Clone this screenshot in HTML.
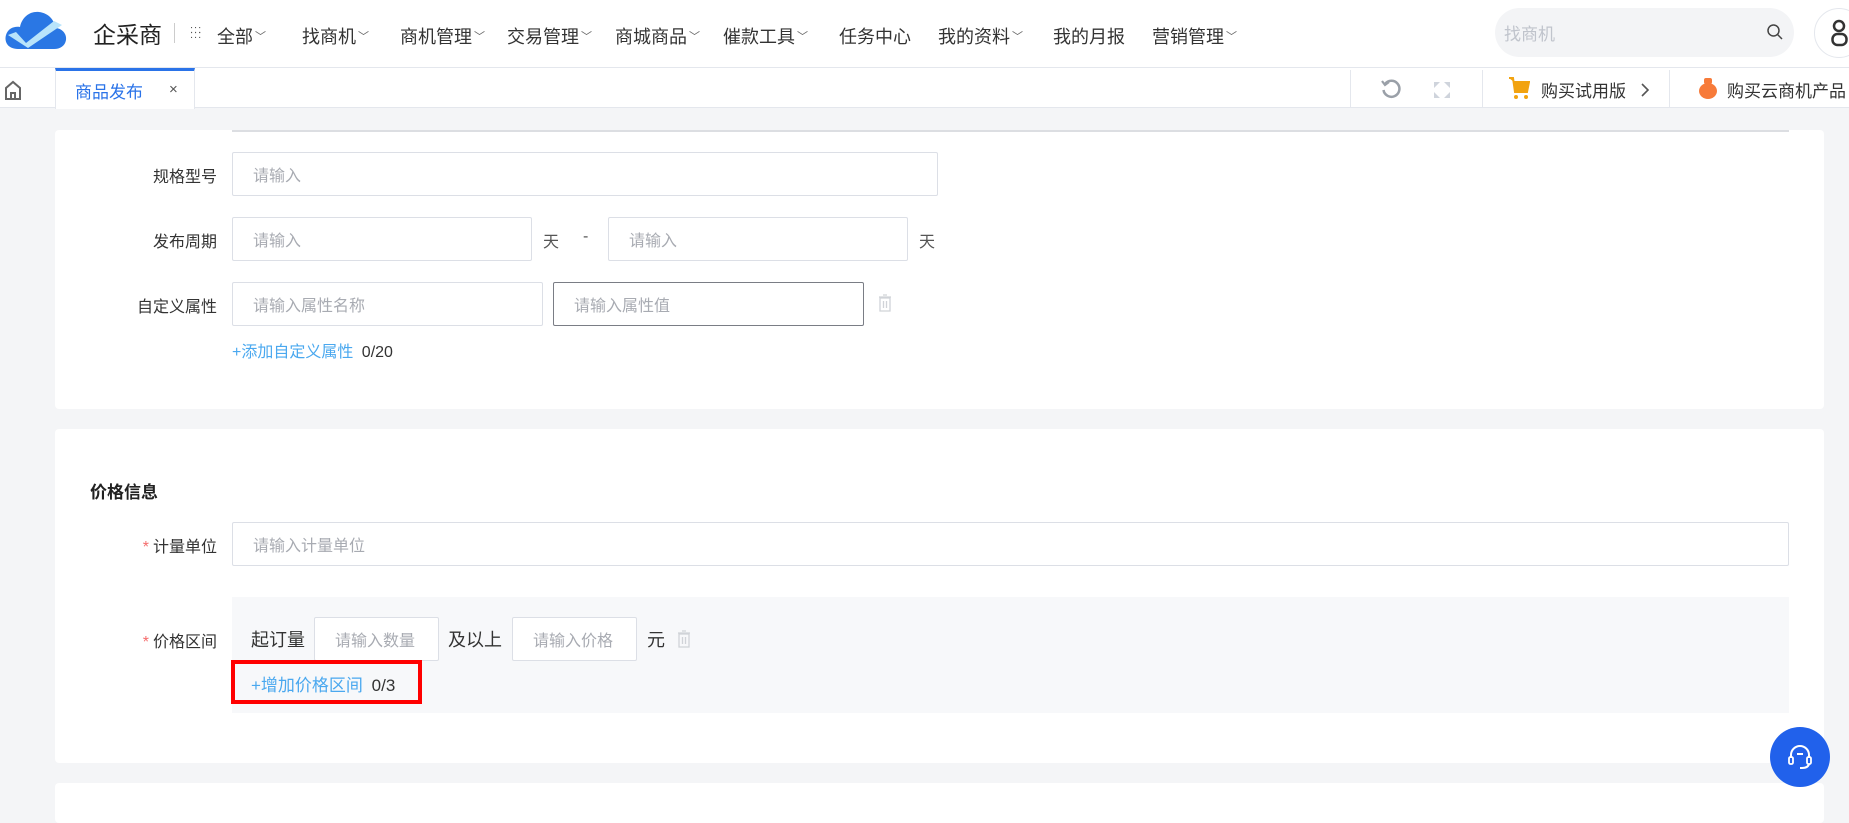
<!DOCTYPE html>
<html><head><meta charset="utf-8"><style>
*{margin:0;padding:0;box-sizing:border-box}
body{width:1849px;height:810px;overflow:hidden;background:#f4f5f7;font-family:"Liberation Sans","Noto Sans CJK SC",sans-serif;color:#333;position:relative}
.a{position:absolute}
.hdr{left:0;top:0;width:1849px;height:68px;background:#fff;border-bottom:1px solid #e4e7ed}
.nav{top:23px;font-size:18px;color:#333;white-space:nowrap}
.nav small{font-size:11px;color:#666;margin-left:2px;vertical-align:3px}
.tabs{left:0;top:68px;width:1849px;height:40px;background:#fff;border-bottom:1px solid #e4e7ed}
.card{background:#fff;border-radius:4px}
.lbl{font-size:16px;color:#333;text-align:right;width:200px;left:17px}
.inp{border:1px solid #dcdfe6;background:#fff;border-radius:2px;font-size:16px;color:#a8abb2;padding-left:20px;display:flex;align-items:center}
.t{font-size:16px;color:#555}
.star{color:#f56c6c;margin-right:4px}
</style></head><body>
<div class="a hdr"></div>
<svg class="a" style="left:4px;top:9px" width="64" height="42" viewBox="0 0 64 42"><path d="M14 40 C4 40 0 33 2 26 C4 19 11 17 16 18 C18 8 26 2 35 3 C45 4 51 12 51 19 C58 19 63 25 62 31 C61 37 56 40 50 40 Z" fill="#2a77e4"/><path d="M4 26 L12 23 L22 34 L50 12 L58 16 L24 39 Z" fill="#b9e4fb"/></svg>
<div class="a" style="left:93px;top:16px;font-size:23px;color:#222">企采商</div>
<div class="a" style="left:174px;top:23px;width:1px;height:20px;background:#ccc"></div>
<div class="a" style="left:190px;top:28px;font-size:11px;line-height:5px;color:#555;letter-spacing:1px">:::<br>:::</div>
<div class="a nav" style="left:217px">全部<small>﹀</small></div>
<div class="a nav" style="left:302px">找商机<small>﹀</small></div>
<div class="a nav" style="left:400px">商机管理<small>﹀</small></div>
<div class="a nav" style="left:507px">交易管理<small>﹀</small></div>
<div class="a nav" style="left:615px">商城商品<small>﹀</small></div>
<div class="a nav" style="left:723px">催款工具<small>﹀</small></div>
<div class="a nav" style="left:839px">任务中心</div>
<div class="a nav" style="left:938px">我的资料<small>﹀</small></div>
<div class="a nav" style="left:1053px">我的月报</div>
<div class="a nav" style="left:1152px">营销管理<small>﹀</small></div>
<div class="a" style="left:1495px;top:8px;width:299px;height:49px;border-radius:25px;background:#f3f4f6"></div>
<div class="a" style="left:1504px;top:20px;font-size:17px;color:#c0c4cc">找商机</div>
<svg class="a" style="left:1766px;top:23px" width="18" height="18" viewBox="0 0 18 18"><circle cx="7.5" cy="7.5" r="5.5" fill="none" stroke="#444" stroke-width="1.5"/><path d="M11.5 11.5 L16 16" stroke="#444" stroke-width="1.5"/></svg>
<div class="a" style="left:1814px;top:8px;width:50px;height:50px;border-radius:50%;border:1px solid #e4e7ed;background:#fff"></div>
<svg class="a" style="left:1830px;top:19px" width="19" height="28" viewBox="0 0 19 28"><circle cx="9" cy="7" r="5" fill="none" stroke="#333" stroke-width="2.5"/><rect x="2.5" y="15" width="14" height="11" rx="5" fill="none" stroke="#333" stroke-width="2.5"/></svg>

<div class="a tabs"></div>
<svg class="a" style="left:4px;top:80px" width="18" height="20" viewBox="0 0 18 20"><path d="M2 19 V8 L9 2 L16 8 V19 Z M7 19 V13 H11 V19" fill="none" stroke="#666" stroke-width="2"/></svg>
<div class="a" style="left:55px;top:68px;width:140px;height:41px;background:#fff;border-top:3px solid #2a73e8;border-left:1px solid #e4e7ed;border-right:1px solid #e4e7ed"></div>
<div class="a" style="left:75px;top:78px;font-size:17px;color:#2a73e8">商品发布</div>
<div class="a" style="left:169px;top:81px;font-size:15px;color:#555">×</div>
<div class="a" style="left:1350px;top:70px;width:1px;height:38px;background:#e4e7ed"></div>
<div class="a" style="left:1482px;top:70px;width:1px;height:38px;background:#e4e7ed"></div>
<div class="a" style="left:1669px;top:70px;width:1px;height:38px;background:#e4e7ed"></div>
<svg class="a" style="left:1380px;top:78px" width="22" height="22" viewBox="0 0 22 22"><path d="M5 6 A8 8 0 1 1 3.5 12" fill="none" stroke="#9aa0a8" stroke-width="2.5"/><path d="M2 3 L5 7 L9 4" fill="none" stroke="#9aa0a8" stroke-width="2.2"/></svg>
<svg class="a" style="left:1433px;top:81px" width="18" height="18" viewBox="0 0 18 18" fill="#cfd4dc"><path d="M1 1h6l-6 6zM17 1h-6l6 6zM1 17h6l-6-6zM17 17h-6l6-6z"/></svg>
<svg class="a" style="left:1508px;top:76px" width="22" height="24" viewBox="0 0 22 24"><path d="M1 2 H5 L7 16 H19 L21 6 H6" fill="#f2a310" stroke="#f2a310" stroke-width="2"/><circle cx="8" cy="21" r="2" fill="#f2a310"/><circle cx="18" cy="21" r="2" fill="#f2a310"/></svg>
<div class="a" style="left:1541px;top:77px;font-size:17px;color:#333">购买试用版</div>
<svg class="a" style="left:1640px;top:82px" width="10" height="16" viewBox="0 0 10 16"><path d="M2 2 L8 8 L2 14" fill="none" stroke="#555" stroke-width="1.6"/></svg>
<svg class="a" style="left:1698px;top:76px" width="20" height="24" viewBox="0 0 20 24"><rect x="6" y="2" width="8" height="6" rx="2" fill="#f77b3a"/><ellipse cx="10" cy="15" rx="9" ry="8" fill="#f77b3a"/></svg>
<div class="a" style="left:1727px;top:77px;font-size:17px;color:#333;white-space:nowrap">购买云商机产品</div>

<div class="a card" style="left:55px;top:130px;width:1769px;height:279px"></div>
<div class="a" style="left:232px;top:130px;width:1557px;height:2px;background:#dcdee2"></div>
<div class="a lbl" style="top:163px">规格型号</div>
<div class="a inp" style="left:232px;top:152px;width:706px;height:44px">请输入</div>
<div class="a lbl" style="top:228px">发布周期</div>
<div class="a inp" style="left:232px;top:217px;width:300px;height:44px">请输入</div>
<div class="a t" style="left:543px;top:228px">天</div>
<div class="a t" style="left:583px;top:228px">-</div>
<div class="a inp" style="left:608px;top:217px;width:300px;height:44px">请输入</div>
<div class="a t" style="left:919px;top:228px">天</div>
<div class="a lbl" style="top:293px">自定义属性</div>
<div class="a inp" style="left:232px;top:282px;width:311px;height:44px">请输入属性名称</div>
<div class="a inp" style="left:553px;top:282px;width:311px;height:44px;border-color:#7a7d85">请输入属性值</div>
<svg class="a" style="left:878px;top:294px" width="14" height="18" viewBox="0 0 14 18"><path d="M1 3h12M5 1h4M2 4h10v13H2z M5.5 7v7 M8.5 7v7" fill="none" stroke="#d0d3d8" stroke-width="1.3"/></svg>
<div class="a" style="left:232px;top:338px;font-size:16px;color:#4aa8ef">+添加自定义属性 <span style="color:#333;margin-left:4px">0/20</span></div>

<div class="a card" style="left:55px;top:429px;width:1769px;height:334px"></div>
<div class="a" style="left:90px;top:478px;font-size:17px;font-weight:bold;color:#222">价格信息</div>
<div class="a lbl" style="top:533px"><span class="star">*</span>计量单位</div>
<div class="a inp" style="left:232px;top:522px;width:1557px;height:44px">请输入计量单位</div>
<div class="a" style="left:232px;top:597px;width:1557px;height:116px;background:#f7f8fa"></div>
<div class="a lbl" style="top:628px"><span class="star">*</span>价格区间</div>
<div class="a" style="left:251px;top:626px;font-size:18px;color:#333">起订量</div>
<div class="a inp" style="left:314px;top:617px;width:125px;height:44px;padding-left:20px">请输入数量</div>
<div class="a" style="left:448px;top:626px;font-size:18px;color:#333">及以上</div>
<div class="a inp" style="left:512px;top:617px;width:125px;height:44px;padding-left:20px">请输入价格</div>
<div class="a" style="left:647px;top:626px;font-size:18px;color:#333">元</div>
<svg class="a" style="left:677px;top:630px" width="14" height="18" viewBox="0 0 14 18"><path d="M1 3h12M5 1h4M2 4h10v13H2z M5.5 7v7 M8.5 7v7" fill="none" stroke="#d0d3d8" stroke-width="1.3"/></svg>
<div class="a" style="left:231px;top:660px;width:191px;height:44px;border:4px solid #ff0000"></div>
<div class="a" style="left:251px;top:671px;font-size:17px;color:#4aa8ef">+增加价格区间 <span style="color:#333;margin-left:4px">0/3</span></div>

<div class="a card" style="left:55px;top:783px;width:1769px;height:40px"></div>
<div class="a" style="left:1770px;top:727px;width:60px;height:60px;border-radius:50%;background:#2161eb"></div>
<svg class="a" style="left:1786px;top:743px" width="28" height="28" viewBox="0 0 28 28"><path d="M5 15 V12 A9 9 0 0 1 23 12 V15" fill="none" stroke="#fff" stroke-width="2"/><rect x="3" y="14" width="4" height="7" rx="1.5" fill="none" stroke="#fff" stroke-width="1.8"/><rect x="21" y="14" width="4" height="7" rx="1.5" fill="none" stroke="#fff" stroke-width="1.8"/><path d="M11 11h6" stroke="#fff" stroke-width="2"/><path d="M23 21 Q22 25 16 25 H14" fill="none" stroke="#fff" stroke-width="2"/></svg>
</body></html>
